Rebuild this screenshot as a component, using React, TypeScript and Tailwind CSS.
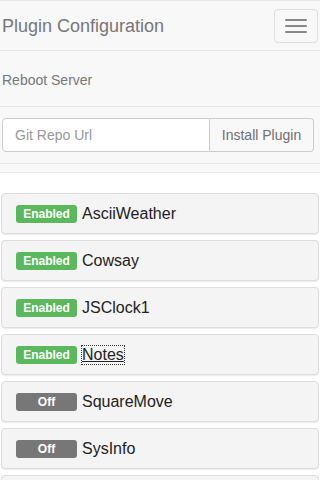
import { useState } from 'react';

interface Plugin {
  name: string;
  enabled: boolean;
}

const plugins: Plugin[] = [
  { name: 'AsciiWeather', enabled: true },
  { name: 'Cowsay', enabled: true },
  { name: 'JSClock1', enabled: true },
  { name: 'Notes', enabled: true },
  { name: 'SquareMove', enabled: false },
  { name: 'SysInfo', enabled: false },
  { name: 'Terminal', enabled: false },
];

export default function App() {
  const [repo, setRepo] = useState('');
  const focused = 'Notes';

  return (
    <div className="min-h-[480px] bg-white font-['Liberation_Sans',Arial,sans-serif]">
      {/* Navbar (collapsed, mobile) */}
      <div className="border-y border-[#e7e7e7] bg-[#f8f8f8]">
        <div className="flex h-[50px] items-center justify-between border-b border-[#e7e7e7] pl-[2px] pr-[2px]">
          <span className="text-[18px] leading-5 text-[#777]">Plugin Configuration</span>
          <button className="flex h-[34px] w-[44px] flex-col items-center justify-center gap-1 rounded border border-[#ddd]">
            <span className="block h-[2px] w-[22px] rounded-[1px] bg-[#888]" />
            <span className="block h-[2px] w-[22px] rounded-[1px] bg-[#888]" />
            <span className="block h-[2px] w-[22px] rounded-[1px] bg-[#888]" />
          </button>
        </div>

        <div className="flex h-[55px] items-center pl-[2px] pt-1 text-[14px] text-[#777]">Reboot Server</div>

        <div className="border-y border-[#e7e7e7] px-[2px] py-[11px]">
          <div className="flex h-[34px] w-[312px]">
            <input
              value={repo}
              onChange={(e) => setRepo(e.target.value)}
              placeholder="Git Repo Url"
              className="h-full w-[208px] rounded-l border border-[#ccc] bg-white px-3 text-[14px] text-[#555] outline-none placeholder:text-[#999]"
            />
            <button className="h-full flex-1 rounded-r border border-l-0 border-[#ccc] bg-[#f8f8f8] text-[14px] text-[#707070]">
              Install Plugin
            </button>
          </div>
        </div>

        <div className="h-[8px]" />
      </div>

      {/* Plugin list */}
      <div className="flex flex-col gap-[6px] px-[1px] pt-5">
        {plugins.map((p) => (
          <div
            key={p.name}
            className="flex h-[41px] items-center gap-[5px] rounded border border-[#ddd] bg-[#f4f4f4] pl-[14px] shadow-[0_1px_1px_rgba(0,0,0,0.08)]"
          >
            <span
              className={`flex h-[18px] w-[61px] items-center justify-center rounded-[3px] text-[12px] font-bold text-white ${
                p.enabled ? 'bg-[#5cb85c]' : 'bg-[#777]'
              }`}
            >
              {p.enabled ? 'Enabled' : 'Off'}
            </span>
            <span
              className={`text-[16px] leading-[18px] text-[#222] ${
                p.name === focused ? 'underline outline-1 outline-dotted outline-[#333]' : ''
              }`}
            >
              {p.name}
            </span>
          </div>
        ))}
      </div>
    </div>
  );
}
